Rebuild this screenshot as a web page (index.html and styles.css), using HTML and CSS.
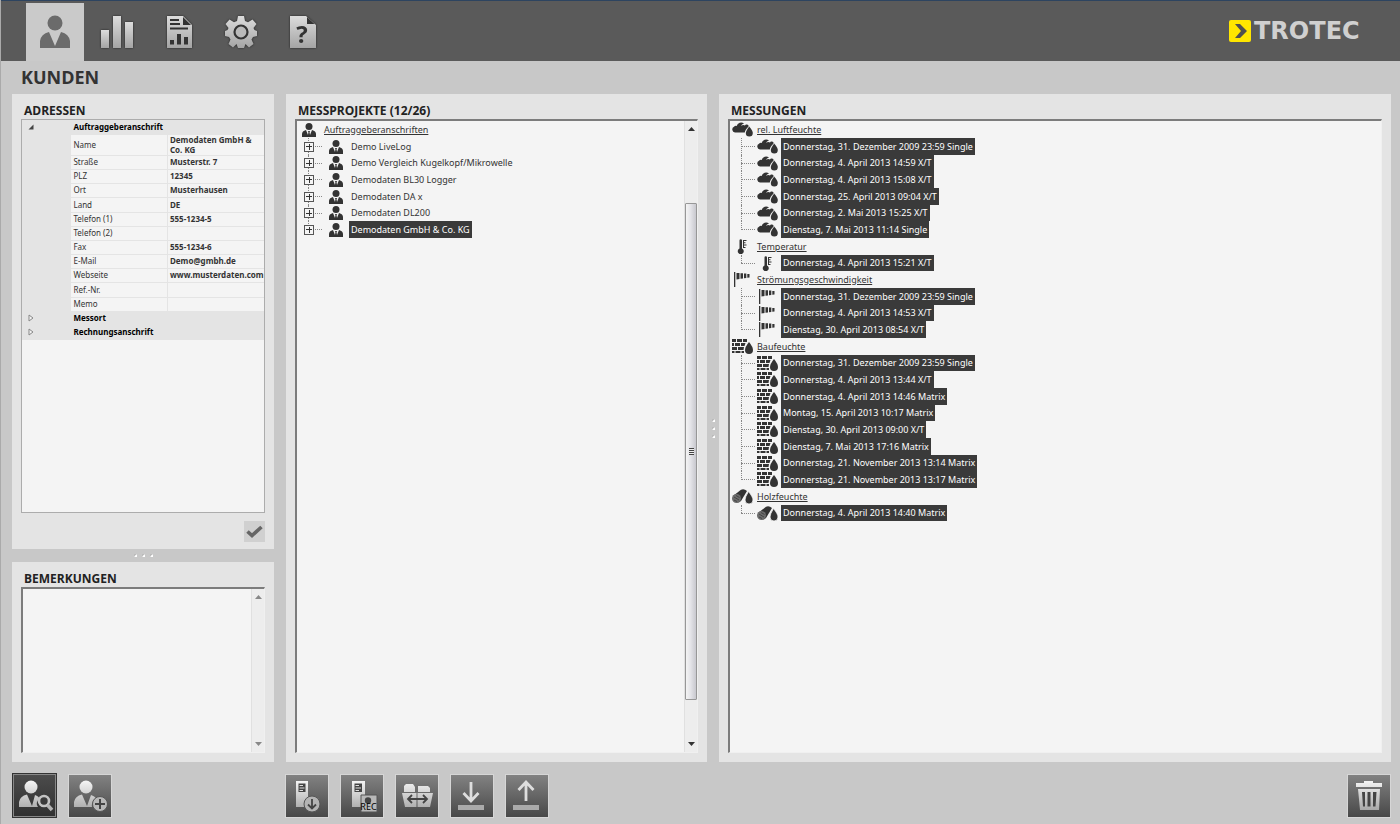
FILE: index.html
```html
<!DOCTYPE html>
<html lang="de">
<head>
<meta charset="utf-8">
<title>Kunden</title>
<link rel="stylesheet" href="styles.css">
</head>
<body>
<svg class="defs" aria-hidden="true">
  <defs>
    <linearGradient id="metal" x1="0" y1="0" x2="0" y2="1"><stop offset="0" stop-color="#dcdcdc"/><stop offset="1" stop-color="#a4a4a4"/></linearGradient>
    <linearGradient id="light" gradientUnits="userSpaceOnUse" x1="0" y1="6" x2="0" y2="38"><stop offset="0" stop-color="#f4f4f4"/><stop offset="1" stop-color="#a0a0a0"/></linearGradient>
    <symbol id="person" viewBox="0 0 30 34">
      <circle cx="15" cy="8" r="7.5"/>
      <path d="M0 33V26Q1 19 9 17L15 31L21 17Q29 19 30 26V33Z"/>
    </symbol>
    <symbol id="user" viewBox="0 0 14 14">
      <circle cx="7" cy="3.5" r="3.5"/>
      <path d="M0 14V11Q0 8 4 7L6 12L6.500 9L5.800 8H8.200L7.500 9L8 12L10 7Q14 8 14 11V14Z"/>
    </symbol>
    <symbol id="drop" viewBox="0 0 8 12"><path d="M4 0Q8 5 8 8A4 4 0 0 1 0 8Q0 5 4 0Z"/></symbol>
    <symbol id="cloud" viewBox="0 0 21 15">
      <path d="M3 10.500A3 3 0 0 1 2 4.800Q3 3.500 4.700 3.900A4.500 4.500 0 0 1 12 1.500Q9.500 2 9 4Q11 2.500 13 3.500Q13.500 2 15 2.500Q17 3 16.500 4.500Q13 8 12.800 10.500Z"/>
      <path d="M17.200 4.500Q20.800 8.500 20.800 11A3.400 3.400 0 0 1 13.800 11Q14 8.500 17.200 4.500Z"/>
    </symbol>
    <symbol id="thermo" viewBox="0 0 21 15">
      <path d="M7.500 1.500A1.200 1.200 0 0 1 10 1.500V9.500A3 3 0 1 1 7.500 9.500Z"/>
      <path d="M11 1H14.500V2H12V3.300H13.500V4.300H12V5.500H14.500V6.500H12V8H13.500V9H11Z"/>
    </symbol>
    <symbol id="wind" viewBox="0 0 21 15">
      <path d="M2 0H3.300V15H2ZM4.500 1H7.500V7L4.500 7.500ZM8.500 1.300H11V6.500L8.500 6.800ZM12 1.600H14.300V6L12 6.300ZM15.300 2H17.500V5.500L15.300 5.800Z"/>
    </symbol>
    <symbol id="bricks" viewBox="0 0 21 15">
      <path d="M0 0H4V3H0ZM5 0H10V3H5ZM11 0H15V3H11ZM0 4H2V7H0ZM3 4H8V7H3ZM9 4H13.500L12.500 7H9ZM0 8H5V11H0ZM6 8H12L11.500 11H6ZM0 12H2.500V14H0ZM3.500 12H8.500V14H3.500ZM9.500 12H12V14H9.500Z"/>
      <path d="M17 3Q21 8 21 11A4 4 0 0 1 13 11Q13 8 17 3Z"/>
    </symbol>
    <symbol id="wood" viewBox="0 0 21 15">
      <path d="M1 7L9 .8Q12 -.5 15 2L9 12Q7 14 4 13.500Z"/>
      <ellipse cx="4.500" cy="9.500" rx="4.500" ry="4.500" fill="#6c6c6c"/>
      <path d="M2 8L7 11M4 6.500L7.500 8.500M2 11L5 12.500" stroke="#333" stroke-width=".7"/>
      <path d="M16.500 2.500Q21 8 21 11A4 4 0 0 1 13 11Q13 8 16.500 2.500Z" stroke="#f4f4f4" stroke-width=".8"/>
    </symbol>
  </defs>
</svg>
<div class="app">
  <header class="topbar">
    <nav class="tabs">
      <button class="tab active" aria-label="Kunden"><svg width="30" height="34" fill="#6b6b6b"><use href="#person"/></svg></button>
      <button class="tab" aria-label="Messwerte"><svg class="raised" width="34" height="34" viewBox="0 0 34 34" fill="url(#metal)"><path d="M1 15H9V33H1Z"/><path d="M13 1H21V33H13Z"/><path d="M25 7H33V33H25Z"/></svg></button>
      <button class="tab" aria-label="Berichte"><svg class="raised" width="34" height="34" viewBox="0 0 34 34"><path fill="url(#metal)" d="M5 1H21L30 10V33H5Z"/><path fill="#333" d="M21 2V10H29ZM8 4H17V6H8ZM8 8H18V10H8ZM8 12.500H26V14.500H8ZM8 25H12V29.500H8ZM15 19H19V29.500H15ZM22 22H26V29.500H22Z"/></svg></button>
      <button class="tab" aria-label="Einstellungen"><svg class="raised" width="34" height="34" viewBox="0 0 34 34"><path fill="url(#metal)" d="M14 1H20L21 6L24 7.300L28.500 4.500L32.500 9L29.500 13L30.500 15L33 16V21L29 22L27.500 24.500L29.500 29L25 32.500L21.500 29L20 33H14L12.500 29L9 32.500L4.500 29L6.500 24.500L5 22L1 21V16L3.500 15L4.500 13L1.500 9L5.500 4.500L10 7.300L13 6Z"/><circle cx="17" cy="17" r="6.500" fill="#b9b9b9" stroke="#333" stroke-width="2.200"/></svg></button>
      <button class="tab" aria-label="Hilfe"><svg class="raised" width="34" height="34" viewBox="0 0 34 34"><path fill="url(#metal)" d="M4 1H20L30 10V33H4Z"/><path fill="#333" d="M21 2V9H28.500Z"/><text x="16" y="28" text-anchor="middle" class="mark">?</text></svg></button>
    </nav>
    <a class="logo" href="#"><svg width="22" height="22" viewBox="0 0 22 22"><rect width="22" height="22" rx="2" fill="#ffe600"/><path fill="#505050" d="M6 4H11L18 11L11 18H6L12 11Z"/></svg><span>TROTEC</span></a>
  </header>
  <h1>KUNDEN</h1>
  <main class="columns">
    <div class="side">
      <section class="panel addresses">
        <h2>ADRESSEN</h2>
        <div class="grid-box">
          <table class="props">
            <tr class="cat"><td class="gutter"><svg width="6" height="6" viewBox="0 0 6 6"><path d="M5.500 .5V5.500H.5Z" fill="#444"/></svg></td><th colspan="2">Auftraggeberanschrift</th></tr>
            <tr><td class="gutter"></td><th>Name</th><td>Demodaten GmbH &amp; Co. KG</td></tr>
            <tr><td class="gutter"></td><th>Straße</th><td>Musterstr. 7</td></tr>
            <tr><td class="gutter"></td><th>PLZ</th><td>12345</td></tr>
            <tr><td class="gutter"></td><th>Ort</th><td>Musterhausen</td></tr>
            <tr><td class="gutter"></td><th>Land</th><td>DE</td></tr>
            <tr><td class="gutter"></td><th>Telefon (1)</th><td>555-1234-5</td></tr>
            <tr><td class="gutter"></td><th>Telefon (2)</th><td></td></tr>
            <tr><td class="gutter"></td><th>Fax</th><td>555-1234-6</td></tr>
            <tr><td class="gutter"></td><th>E-Mail</th><td>Demo@gmbh.de</td></tr>
            <tr><td class="gutter"></td><th>Webseite</th><td>www.musterdaten.com</td></tr>
            <tr><td class="gutter"></td><th>Ref.-Nr.</th><td></td></tr>
            <tr><td class="gutter"></td><th>Memo</th><td></td></tr>
            <tr class="cat"><td class="gutter"><svg width="6" height="8" viewBox="0 0 6 8"><path d="M1 1L5 4L1 7Z" fill="#f4f4f4" stroke="#888"/></svg></td><th colspan="2">Messort</th></tr>
            <tr class="cat"><td class="gutter"><svg width="6" height="8" viewBox="0 0 6 8"><path d="M1 1L5 4L1 7Z" fill="#f4f4f4" stroke="#888"/></svg></td><th colspan="2">Rechnungsanschrift</th></tr>
          </table>
        </div>
        <button class="confirm" aria-label="Übernehmen"><svg width="17" height="13" viewBox="0 0 17 13"><path d="M1.500 6.500L6 10.500L15.500 2" fill="none" stroke="#666" stroke-width="3.600"/></svg></button>
      </section>
      <div class="splitter"><i></i><i></i><i></i></div>
      <section class="panel notes">
        <h2><label for="notes">BEMERKUNGEN</label></h2>
        <div class="inset">
          <textarea id="notes"></textarea>
          <div class="scroll plain"><svg width="7" height="4" viewBox="0 0 7 4"><path d="M0 4L3.500 0L7 4Z" fill="#888"/></svg><svg width="7" height="4" viewBox="0 0 7 4"><path d="M0 0L3.500 4L7 0Z" fill="#888"/></svg></div>
        </div>
      </section>
    </div>
    <section class="panel">
      <h2>MESSPROJEKTE (12/26)</h2>
      <div class="inset">
        <ul class="tree projects">
          <li class="root"><svg class="ico"><use href="#user"/></svg><a href="#">Auftraggeberanschriften</a></li>
          <li><button class="plus" aria-label="Aufklappen"></button><svg class="ico"><use href="#user"/></svg><span>Demo LiveLog</span></li>
          <li><button class="plus" aria-label="Aufklappen"></button><svg class="ico"><use href="#user"/></svg><span>Demo Vergleich Kugelkopf/Mikrowelle</span></li>
          <li><button class="plus" aria-label="Aufklappen"></button><svg class="ico"><use href="#user"/></svg><span>Demodaten BL30 Logger</span></li>
          <li><button class="plus" aria-label="Aufklappen"></button><svg class="ico"><use href="#user"/></svg><span>Demodaten DA x</span></li>
          <li><button class="plus" aria-label="Aufklappen"></button><svg class="ico"><use href="#user"/></svg><span>Demodaten DL200</span></li>
          <li class="last"><button class="plus" aria-label="Aufklappen"></button><svg class="ico"><use href="#user"/></svg><span class="sel">Demodaten GmbH &amp; Co. KG</span></li>
        </ul>
        <div class="scroll">
          <svg width="7" height="4" viewBox="0 0 7 4"><path d="M0 4L3.500 0L7 4Z" fill="#333"/></svg>
          <div class="track"><div class="thumb"><i></i></div></div>
          <svg width="7" height="4" viewBox="0 0 7 4"><path d="M0 0L3.500 4L7 0Z" fill="#333"/></svg>
        </div>
      </div>
    </section>
    <div class="splitter vertical"><i></i><i></i><i></i></div>
    <section class="panel">
      <h2>MESSUNGEN</h2>
      <div class="inset">
        <ul class="tree readings">
          <li class="root"><svg class="ico"><use href="#cloud"/></svg><a href="#">rel. Luftfeuchte</a></li>
          <li><svg class="ico"><use href="#cloud"/></svg><span class="sel">Donnerstag, 31. Dezember 2009 23:59 Single</span></li>
          <li><svg class="ico"><use href="#cloud"/></svg><span class="sel">Donnerstag, 4. April 2013 14:59 X/T</span></li>
          <li><svg class="ico"><use href="#cloud"/></svg><span class="sel">Donnerstag, 4. April 2013 15:08 X/T</span></li>
          <li><svg class="ico"><use href="#cloud"/></svg><span class="sel">Donnerstag, 25. April 2013 09:04 X/T</span></li>
          <li><svg class="ico"><use href="#cloud"/></svg><span class="sel">Donnerstag, 2. Mai 2013 15:25 X/T</span></li>
          <li class="last"><svg class="ico"><use href="#cloud"/></svg><span class="sel">Dienstag, 7. Mai 2013 11:14 Single</span></li>
          <li class="root"><svg class="ico"><use href="#thermo"/></svg><a href="#">Temperatur</a></li>
          <li class="last"><svg class="ico"><use href="#thermo"/></svg><span class="sel">Donnerstag, 4. April 2013 15:21 X/T</span></li>
          <li class="root"><svg class="ico"><use href="#wind"/></svg><a href="#">Strömungsgeschwindigkeit</a></li>
          <li><svg class="ico"><use href="#wind"/></svg><span class="sel">Donnerstag, 31. Dezember 2009 23:59 Single</span></li>
          <li><svg class="ico"><use href="#wind"/></svg><span class="sel">Donnerstag, 4. April 2013 14:53 X/T</span></li>
          <li class="last"><svg class="ico"><use href="#wind"/></svg><span class="sel">Dienstag, 30. April 2013 08:54 X/T</span></li>
          <li class="root"><svg class="ico"><use href="#bricks"/></svg><a href="#">Baufeuchte</a></li>
          <li><svg class="ico"><use href="#bricks"/></svg><span class="sel">Donnerstag, 31. Dezember 2009 23:59 Single</span></li>
          <li><svg class="ico"><use href="#bricks"/></svg><span class="sel">Donnerstag, 4. April 2013 13:44 X/T</span></li>
          <li><svg class="ico"><use href="#bricks"/></svg><span class="sel">Donnerstag, 4. April 2013 14:46 Matrix</span></li>
          <li><svg class="ico"><use href="#bricks"/></svg><span class="sel">Montag, 15. April 2013 10:17 Matrix</span></li>
          <li><svg class="ico"><use href="#bricks"/></svg><span class="sel">Dienstag, 30. April 2013 09:00 X/T</span></li>
          <li><svg class="ico"><use href="#bricks"/></svg><span class="sel">Dienstag, 7. Mai 2013 17:16 Matrix</span></li>
          <li><svg class="ico"><use href="#bricks"/></svg><span class="sel">Donnerstag, 21. November 2013 13:14 Matrix</span></li>
          <li class="last"><svg class="ico"><use href="#bricks"/></svg><span class="sel">Donnerstag, 21. November 2013 13:17 Matrix</span></li>
          <li class="root"><svg class="ico"><use href="#wood"/></svg><a href="#">Holzfeuchte</a></li>
          <li class="last"><svg class="ico"><use href="#wood"/></svg><span class="sel">Donnerstag, 4. April 2013 14:40 Matrix</span></li>
        </ul>
      </div>
    </section>
  </main>
  <footer class="actions">
    <div class="group customers">
      <button class="tool pressed" aria-label="Kunde suchen"><svg width="42" height="42" viewBox="0 0 42 42"><g fill="url(#light)"><circle cx="17" cy="12" r="6.500"/><path d="M5 32V27Q6 21 13 19.500L18 31L21 20Q26 22 25 24Q21 28 24 32Z"/></g><circle cx="30" cy="26" r="5" fill="none" stroke="#c4c4c4" stroke-width="2.600"/><path d="M33.500 30L38 35" stroke="#b4b4b4" stroke-width="3.600"/></svg></button>
      <button class="tool" aria-label="Kunde hinzufügen"><svg width="42" height="42" viewBox="0 0 42 42"><g fill="url(#light)"><circle cx="17" cy="12" r="6.500"/><path d="M5 32V27Q6 21 13 19.500L18 31L22 20Q25 21 27 23Q22 27 23 32Z"/></g><circle cx="31" cy="29" r="7.500" fill="#b8b8b8" stroke="#555"/><path d="M31 24V34M26 29H36" stroke="#444" stroke-width="2"/></svg></button>
    </div>
    <div class="group">
      <button class="tool" aria-label="Gerät auslesen"><svg width="42" height="42" viewBox="0 0 42 42"><path fill="url(#light)" d="M10 6H22V32H10Z"/><path fill="#444" d="M12.500 8.500H19.500V17H12.500Z"/><path d="M13.500 10.500H17M13.500 13H18.500M13.500 15.500H17" stroke="#ddd"/><circle cx="26" cy="29" r="8" fill="#b4b4b4" stroke="#555"/><path d="M26 24V33M22 29.500L26 33.500L30 29.500" fill="none" stroke="#444" stroke-width="1.800"/></svg></button>
      <button class="tool" aria-label="Aufzeichnung"><svg width="42" height="42" viewBox="0 0 42 42"><path fill="url(#light)" d="M11 6H24V32H11Z"/><path fill="#444" d="M13.500 8.500H21V17H13.500Z"/><path d="M14.500 10.500H18M14.500 13H20M14.500 15.500H18" stroke="#ddd"/><path d="M20 20H36V37H20Z" fill="#b8b8b8" stroke="#555"/><circle cx="27" cy="25.500" r="3.200" fill="#444"/><text x="27.500" y="35" text-anchor="middle" class="rec">REC</text></svg></button>
      <button class="tool" aria-label="Projekte verschieben"><svg width="42" height="42" viewBox="0 0 42 42"><path fill="url(#light)" d="M8 17V11L10 9H17L19 12V17ZM22 17V11H32L34 13V17ZM6 18H20.500V32H9ZM21.500 18H37L34 32H21.500Z"/><path d="M12 24H31M16 20L12 24L16 28M27 20L31 24L27 28" fill="none" stroke="#444" stroke-width="1.800"/></svg></button>
      <button class="tool" aria-label="Importieren"><svg width="42" height="42" viewBox="0 0 42 42"><path d="M20 7V26M12.500 18L20 26L27.500 18" fill="none" stroke="#dedede" stroke-width="2.800"/><path fill="#aaa" d="M7 30H33V35H7Z"/></svg></button>
      <button class="tool" aria-label="Exportieren"><svg width="42" height="42" viewBox="0 0 42 42"><path d="M20 26V7M12.500 15L20 7L27.500 15" fill="none" stroke="#dedede" stroke-width="2.800"/><path fill="#aaa" d="M7 30H33V35H7Z"/></svg></button>
    </div>
    <button class="tool trash" aria-label="Löschen"><svg width="42" height="42" viewBox="0 0 42 42"><path fill="url(#light)" d="M8 8H16V6H25V8H34V12H8ZM10 14H32L31 35H12Z"/><path fill="#444" d="M14 17H17V31.500H15ZM19.500 17H22.500V31.500H19.500ZM25 17H28.500L27.500 31.500H25Z"/></svg></button>
  </footer>
</div>
</body>
</html>
```
FILE: styles.css
```css
* { box-sizing: border-box; }
body {
  margin: 0;
  background: #c8c8c8;
  color: #333;
  font-family: "Noto Sans", "Open Sans", sans-serif;
  font-size: 9px;
}
button { padding: 0; border: 0; background: none; font: inherit; color: inherit; }
svg { display: block; flex: none; }
a { color: inherit; }
.defs { position: absolute; width: 0; height: 0; }
.app {
  display: flex;
  flex-direction: column;
  min-height: 100vh;
  border-left: 1px solid #aaa;
}

.topbar {
  display: flex;
  justify-content: space-between;
  height: 61px;
  padding: 2px 15px 0 25px;
  background: #5a5a5a;
  border-top: 1px solid #2d4460;
}
.tabs { display: flex; gap: 4px; }
.tab { display: flex; justify-content: center; width: 58px; padding-top: 12px; }
.tab.active { background: #cacaca; }
.raised { filter: drop-shadow(0 0 1px #222); }
.mark { font: bold 24px "Open Sans", sans-serif; fill: #333; }
.logo {
  display: flex;
  align-items: center;
  gap: 3px;
  height: 56px;
  width: 156px;
  color: #d0d0d0;
  font: bold 24px/24px "DejaVu Sans", sans-serif;
  text-decoration: none;
}

h1 { margin: 0; padding: 0 20px; font: bold 18px/33px "Open Sans", sans-serif; }
h2 { margin: 0; padding: 0 3px; font: bold 12px/17px "Open Sans", sans-serif; color: #222; }

.columns {
  flex: 1;
  display: grid;
  grid-template-columns: 262px minmax(0, 421fr) 12px minmax(0, 672fr);
  padding: 0 9px 0 11px;
}
.side { display: flex; flex-direction: column; margin-right: 0; }
.columns > .panel:nth-child(2) { margin-left: 12px; }
.columns { grid-template-columns: 262px minmax(0, 433fr) 12px minmax(0, 672fr); }
.panel { display: flex; flex-direction: column; padding: 8px 9px 9px; background: #e4e4e4; }
.addresses { flex: 463; padding-bottom: 7px; }
.notes { flex: 192; }

.splitter { display: flex; justify-content: center; align-items: center; gap: 5px; height: 13px; }
.splitter i { width: 3px; height: 3px; background: #eee; border: 1px solid #bbb; border-right-color: #fff; border-bottom-color: #fff; }
.splitter.vertical { flex-direction: column; height: auto; }

.grid-box { flex: 1; margin: 0 0 8px; border: 1px solid #acacac; background: #f4f4f4; }
.props { width: 100%; border-collapse: collapse; font-size: 8px; table-layout: fixed; }
.props tr { height: 14px; }
.props tr:nth-child(6n) { height: 15px; }
.props td, .props th {
  padding: 0 2px;
  border-bottom: 1px solid #e4e4e4;
  font-weight: normal;
  line-height: 10px;
  text-align: left;
}
.props th { width: 66px; border-right: 1px solid #e4e4e4; }
.props td { font-weight: bold; }
.props .gutter { width: 17px; padding: 0 0 0 6px; background: #e4e4e4; }
.props .cat th { background: #e4e4e4; color: #000; font-weight: bold; }
.confirm { display: grid; place-items: center; align-self: flex-end; width: 21px; height: 21px; background: #d0d0d0; }

.inset {
  flex: 1;
  display: flex;
  border: 2px solid #7c7c7c;
  border-width: 2px 1px 1px 2px;
  border-right-color: #f0f0f0;
  border-bottom-color: #f0f0f0;
  background: #f4f4f4;
}
textarea { flex: 1; min-width: 0; border: 0; background: none; resize: none; outline: 0; font: inherit; }
.scroll {
  display: flex;
  flex-direction: column;
  align-items: center;
  gap: 4px;
  width: 13px;
  padding: 6px 0;
  background: #ededed;
  border-left: 1px solid #e0e0e0;
}
.scroll.plain { justify-content: space-between; }
.track { flex: 1; align-self: stretch; display: flex; flex-direction: column; padding: 68px 0 38px; }
.thumb {
  flex: 1;
  display: grid;
  place-items: center;
  border: 1px solid #979797;
  border-radius: 1px;
  background: linear-gradient(90deg, #f4f4f4, #e4e4e8 45%, #c8c8ce);
}
.thumb i { width: 5px; height: 7px; background: repeating-linear-gradient(#444 0 1px, #eee 1px 2px); }

.tree { flex: 1; margin: 0; padding: 0; list-style: none; min-width: 0; }
.tree li { display: flex; align-items: center; position: relative; height: 17px; white-space: nowrap; }
.tree li:nth-child(3n) { height: 16px; }
.ico { fill: #333; }
.tree span { align-self: stretch; display: flex; align-items: center; padding: 0 2px; line-height: 12px; }
.sel { background: #3a3a3a; color: #fff; }
.tree li:not(.root)::before { content: ""; position: absolute; left: 11px; top: 0; bottom: 0; border-left: 1px dotted #888; }
.tree li:not(.root)::after { content: ""; position: absolute; left: 11px; top: 8px; width: 14px; border-top: 1px dotted #888; }
.tree li.last::before { bottom: 8px; }

.projects .ico { width: 14px; height: 14px; }
.projects li { padding-left: 7px; gap: 6px; }
.projects .root { padding-left: 5px; gap: 8px; }
.projects .plus {
  position: relative;
  z-index: 1;
  width: 10px;
  height: 10px;
  margin-right: 9px;
  border: 1px solid #555;
  background:
    linear-gradient(#333, #333) center / 6px 1px no-repeat,
    linear-gradient(#333, #333) center / 1px 6px no-repeat,
    #f4f4f4;
}
.readings .ico { width: 21px; height: 15px; }
.readings li { padding-left: 27px; gap: 3px; }
.readings .root { padding-left: 2px; gap: 4px; }

.actions { display: flex; align-items: flex-start; padding: 11px 10px 6px 11px; }
.group { display: flex; align-items: center; gap: 13px; height: 45px; }
.customers { width: 274px; gap: 12px; }
.tool {
  display: grid;
  place-items: center;
  width: 42px;
  height: 42px;
  background: linear-gradient(#828282, #484848);
  box-shadow: 0 0 0 1px #d6d6d6;
}
.tool.pressed {
  width: 45px;
  height: 45px;
  border: 1px solid #333;
  background: linear-gradient(#4c4c4c, #303030);
  box-shadow: inset 0 0 0 1px #888;
}
.trash { margin: 2px 0 0 auto; }
```
